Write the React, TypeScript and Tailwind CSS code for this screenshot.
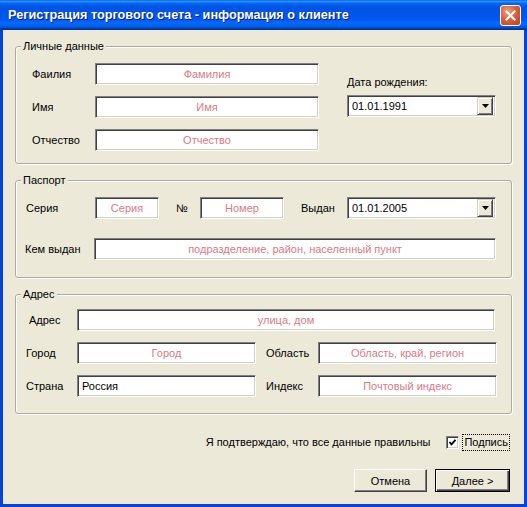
import React from "react";

function Sunken({ className, children }: { className: string; children?: React.ReactNode }) {
  return (
    <div
      className={
        "h-[22px] bg-white border border-t-[#808080] border-l-[#808080] border-r-white border-b-white shadow-[inset_1px_1px_0_#404040,inset_-1px_-1px_0_#D4D0C8] flex items-center shrink-0 " +
        className
      }
    >
      {children}
    </div>
  );
}

function TextBox({ w, ph, value }: { w: string; ph?: string; value?: string }) {
  return (
    <Sunken className={w + (value ? " justify-start pl-[4px] text-black" : " justify-center text-[#DB7A85]")}>
      <span className="whitespace-nowrap">{value ?? ph}</span>
    </Sunken>
  );
}

function Combo({ value }: { value: string }) {
  return (
    <Sunken className="w-[149px] pl-[4px] pr-[2px] justify-between">
      <span>{value}</span>
      <div className="w-[16px] h-[18px] bg-[#ECE9D8] border border-t-[#D4D0C8] border-l-[#D4D0C8] border-r-[#404040] border-b-[#404040] shadow-[inset_1px_1px_0_#fff,inset_-1px_-1px_0_#808080] flex items-center justify-center">
        <svg width="7" height="4" viewBox="0 0 7 4">
          <path d="M0 0h7L3.5 4z" fill="#000" />
        </svg>
      </div>
    </Sunken>
  );
}

function Group({ title, className, children }: { title: string; className: string; children?: React.ReactNode }) {
  return (
    <div
      className={
        "relative border border-[#AEAC9F] rounded-[3px] shadow-[inset_1px_1px_0_#fff,1px_1px_0_#fff] " + className
      }
    >
      <span className="absolute -top-[8px] left-[5px] px-[2px] bg-[#ECE9D8] leading-[14px]">{title}</span>
      {children}
    </div>
  );
}

function Row({ label, lw, children, className }: { label: string; lw: string; children?: React.ReactNode; className?: string }) {
  return (
    <div className={"flex items-center h-[22px] " + (className ?? "")}>
      <span className={"shrink-0 whitespace-nowrap " + lw}>{label}</span>
      {children}
    </div>
  );
}

export default function App() {
  return (
    <div className="w-[527px] h-[507px] flex flex-col bg-[#0842D6] font-['Liberation_Sans',Arial,sans-serif] text-[11px] leading-[14px] text-black">
      <div className="h-[30px] shrink-0 flex items-center pl-[8px] pr-[6px] bg-[linear-gradient(to_bottom,#0058EE_0%,#3593FF_4%,#288EFF_6%,#127DFF_8%,#036FFC_10%,#0262EE_14%,#0057E5_20%,#0054E3_24%,#0055EB_56%,#005BF5_66%,#026AFE_76%,#0062EF_86%,#0052D6_92%,#0040AB_94%,#003092_100%)]">
        <span className="text-white font-bold text-[12.7px] whitespace-nowrap [text-shadow:1px_1px_0_#0A1A80]">
          Регистрация торгового счета - информация о клиенте
        </span>
        <div className="ml-auto w-[21px] h-[21px] rounded-[3px] border border-white bg-[radial-gradient(circle_at_35%_30%,#F2A286_0%,#DE5F38_45%,#C4401A_100%)] flex items-center justify-center">
          <svg width="11" height="11" viewBox="0 0 11 11">
            <path d="M1.5 1.5L9.5 9.5M9.5 1.5L1.5 9.5" stroke="#fff" strokeWidth="2.2" strokeLinecap="square" />
          </svg>
        </div>
      </div>

      <div className="flex-1 mx-[3px] mb-[3px] bg-[#ECE9D8] flex flex-col px-[12px] pt-[16px]">
        <Group title="Личные данные" className="pt-[16px] pb-[12px] flex">
          <div className="flex flex-col gap-[11px] pl-[16px]">
            <Row label="Фаилия" lw="w-[63px]">
              <TextBox w="w-[224px]" ph="Фамилия" />
            </Row>
            <Row label="Имя" lw="w-[63px]">
              <TextBox w="w-[224px]" ph="Имя" />
            </Row>
            <Row label="Отчество" lw="w-[63px]">
              <TextBox w="w-[224px]" ph="Отчество" />
            </Row>
          </div>
          <div className="ml-[28px] flex flex-col pt-[12px]">
            <span>Дата рождения:</span>
            <div className="mt-[6px]">
              <Combo value="01.01.1991" />
            </div>
          </div>
        </Group>

        <Group title="Паспорт" className="mt-[16px] pt-[16px] pb-[17px] pl-[10px] flex flex-col gap-[19px]">
          <Row label="Серия" lw="w-[69px]">
            <TextBox w="w-[64px]" ph="Серия" />
            <span className="ml-[17px] w-[24px] shrink-0">№</span>
            <TextBox w="w-[84px]" ph="Номер" />
            <span className="ml-[17px] w-[46px] shrink-0">Выдан</span>
            <Combo value="01.01.2005" />
          </Row>
          <Row label="Кем выдан" lw="w-[69px]" className="-ml-[1px]">
            <TextBox w="w-[402px]" ph="подразделение, район, населенный пункт" />
          </Row>
        </Group>

        <Group title="Адрес" className="mt-[16px] pt-[14px] pb-[16px] pl-[10px] flex flex-col gap-[11px]">
          <Row label="Адрес" lw="w-[51px] pl-[3px]">
            <TextBox w="w-[418px]" ph="улица, дом" />
          </Row>
          <Row label="Город" lw="w-[51px]">
            <TextBox w="w-[179px]" ph="Город" />
            <span className="ml-[10px] w-[52px] shrink-0">Область</span>
            <TextBox w="w-[179px]" ph="Область, край, регион" />
          </Row>
          <Row label="Страна" lw="w-[51px]">
            <TextBox w="w-[179px]" value="Россия" />
            <span className="ml-[10px] w-[52px] shrink-0">Индекс</span>
            <TextBox w="w-[179px]" ph="Почтовый индекс" />
          </Row>
        </Group>

        <div className="mt-[18px] h-[20px] flex items-center justify-end pr-[2px]">
          <span className="whitespace-nowrap">Я подтверждаю, что все данные правильны</span>
          <div className="ml-[16px] w-[13px] h-[13px] bg-white border border-t-[#808080] border-l-[#808080] border-r-white border-b-white shadow-[inset_1px_1px_0_#404040,inset_-1px_-1px_0_#D4D0C8] flex items-center justify-center">
            <svg width="9" height="9" viewBox="0 0 9 9">
              <path d="M1.5 4L3.5 6.3L7.5 1.8" stroke="#000" strokeWidth="1.8" fill="none" />
            </svg>
          </div>
          <span className="ml-[3px] px-[1px] border border-dotted border-black leading-[15px]">Подпись</span>
        </div>

        <div className="mt-[17px] flex justify-end gap-[8px] pr-[2px]">
          <div className="w-[73px] h-[23px] flex items-center justify-center border border-t-white border-l-white border-r-[#404040] border-b-[#404040] shadow-[inset_-1px_-1px_0_#808080]">
            Отмена
          </div>
          <div className="w-[75px] h-[23px] flex items-center justify-center border border-black shadow-[inset_1px_1px_0_#fff,inset_-1px_-1px_0_#404040,inset_-2px_-2px_0_#808080]">
            Далее &gt;
          </div>
        </div>
      </div>
    </div>
  );
}
